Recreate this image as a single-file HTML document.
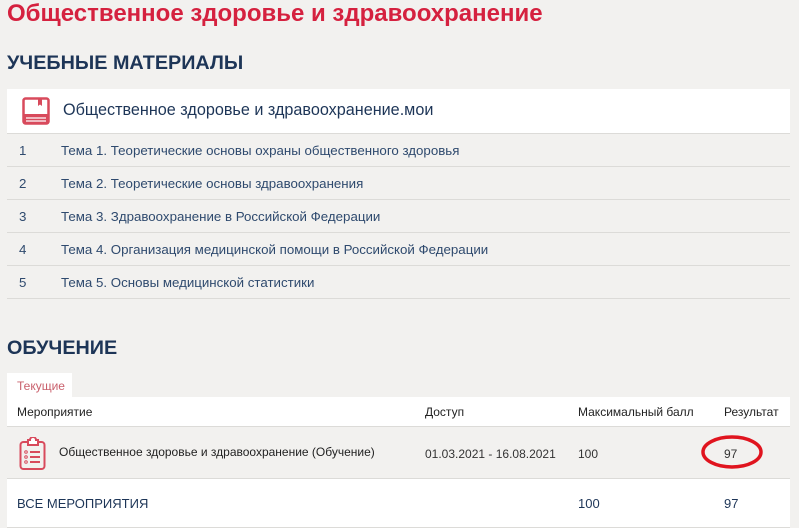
<!DOCTYPE html>
<html><head><meta charset="utf-8"><style>
body{margin:0;width:799px;height:528px;background:#f2f1ef;font-family:"Liberation Sans",sans-serif;position:relative;overflow:hidden}
.a{position:absolute;white-space:nowrap}
.row{position:absolute;left:7px;width:783px;height:32px;border-bottom:1px solid #dcdbd8;font-size:13.3px;color:#2f4a6e}
.row span{position:absolute;top:9px}
</style></head><body>
<div class="a" style="left:7px;top:0px;font-size:24px;font-weight:bold;color:#d5213f">Общественное здоровье и здравоохранение</div>
<div class="a" style="left:7px;top:52px;font-size:19.8px;font-weight:bold;color:#1d3557">УЧЕБНЫЕ МАТЕРИАЛЫ</div>
<div class="a" style="left:7px;top:89px;width:783px;height:44px;background:#fff;border-bottom:1px solid #dcdbd8"></div>
<svg class="a" style="left:22px;top:97px" width="28" height="28" viewBox="0 0 28 28"><rect x="1.5" y="1.5" width="25" height="25" rx="2" fill="none" stroke="#d84a5c" stroke-width="2.5"/><rect x="1.5" y="17" width="25" height="9.5" fill="#d84a5c"/><line x1="4" y1="21" x2="24" y2="21" stroke="#fff" stroke-width="1.2"/><line x1="4" y1="24" x2="24" y2="24" stroke="#fff" stroke-width="1.2"/><path d="M16 2V9L18 7.5L20 9V2Z" fill="#d84a5c"/></svg>
<div class="a" style="left:63px;top:101px;font-size:16.2px;color:#1d3557">Общественное здоровье и здравоохранение.мои</div>
<div class="row" style="top:134px"><span style="left:12px">1</span><span style="left:54px">Тема 1. Теоретические основы охраны общественного здоровья</span></div>
<div class="row" style="top:167px"><span style="left:12px">2</span><span style="left:54px">Тема 2. Теоретические основы здравоохранения</span></div>
<div class="row" style="top:200px"><span style="left:12px">3</span><span style="left:54px">Тема 3. Здравоохранение в Российской Федерации</span></div>
<div class="row" style="top:233px"><span style="left:12px">4</span><span style="left:54px">Тема 4. Организация медицинской помощи в Российской Федерации</span></div>
<div class="row" style="top:266px"><span style="left:12px">5</span><span style="left:54px">Тема 5. Основы медицинской статистики</span></div>
<div class="a" style="left:7px;top:337px;font-size:19.8px;font-weight:bold;color:#1d3557">ОБУЧЕНИЕ</div>
<div class="a" style="left:7px;top:373px;width:65px;height:24px;background:#fff"></div>
<div class="a" style="left:17px;top:379px;font-size:12px;color:#c9606c">Текущие</div>
<div class="a" style="left:7px;top:397px;width:783px;height:29px;background:#fff;border-bottom:1px solid #dcdbd8"></div>
<div class="a" style="left:17px;top:405px;font-size:12px;color:#222">Мероприятие</div>
<div class="a" style="left:425px;top:405px;font-size:12px;color:#222">Доступ</div>
<div class="a" style="left:578px;top:405px;font-size:12px;color:#222">Максимальный балл</div>
<div class="a" style="left:724px;top:405px;font-size:12px;color:#222">Результат</div>
<svg class="a" style="left:19px;top:437px" width="28" height="34" viewBox="0 0 28 34"><rect x="1.5" y="5" width="24" height="27" rx="3" fill="none" stroke="#d84a5c" stroke-width="2"/><path d="M9 5V3H11A3 3 0 0 1 17 3H19V8H9Z" fill="#fff" stroke="#d84a5c" stroke-width="2"/><circle cx="7" cy="15" r="1.3" fill="none" stroke="#d84a5c"/><circle cx="7" cy="20" r="1.3" fill="none" stroke="#d84a5c"/><circle cx="7" cy="25" r="1.3" fill="none" stroke="#d84a5c"/><path d="M11 15H21M11 20H21M11 25H21" stroke="#d84a5c" stroke-width="2"/></svg>
<div class="a" style="left:59px;top:445px;font-size:12px;color:#222">Общественное здоровье и здравоохранение (Обучение)</div>
<div class="a" style="left:425px;top:447px;font-size:12px;color:#333">01.03.2021 - 16.08.2021</div>
<div class="a" style="left:578px;top:447px;font-size:12px;color:#333">100</div>
<div class="a" style="left:724px;top:447px;font-size:12px;color:#333">97</div>
<svg class="a" style="left:700px;top:433px" width="66" height="38"><ellipse cx="32" cy="19" rx="29" ry="15" fill="none" stroke="#e0141e" stroke-width="3.5"/></svg>
<div class="a" style="left:7px;top:478px;width:783px;height:48px;background:#fff;border-top:1px solid #dcdbd8;border-bottom:1px solid #dcdbd8"></div>
<div class="a" style="left:17px;top:496px;font-size:13px;color:#1d3557">ВСЕ МЕРОПРИЯТИЯ</div>
<div class="a" style="left:578px;top:496px;font-size:13px;color:#1d3557">100</div>
<div class="a" style="left:724px;top:496px;font-size:13px;color:#1d3557">97</div>
</body></html>
